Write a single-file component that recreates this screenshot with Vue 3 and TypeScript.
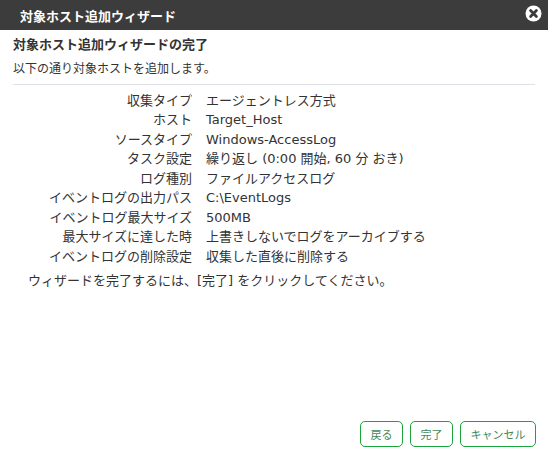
<script setup lang="ts">
const rows: [string, string][] = [
  ['収集タイプ', 'エージェントレス方式'],
  ['ホスト', 'Target_Host'],
  ['ソースタイプ', 'Windows-AccessLog'],
  ['タスク設定', '繰り返し (0:00 開始, 60 分 おき)'],
  ['ログ種別', 'ファイルアクセスログ'],
  ['イベントログの出力パス', 'C:\\EventLogs'],
  ['イベントログ最大サイズ', '500MB'],
  ['最大サイズに達した時', '上書きしないでログをアーカイブする'],
  ['イベントログの削除設定', '収集した直後に削除する'],
]
</script>

<template>
  <div class="dialog">
    <header class="titlebar">
      <span class="title">対象ホスト追加ウィザード</span>
      <svg class="close" width="17" height="17" viewBox="0 0 17 17">
        <circle cx="8.5" cy="8.5" r="8" fill="#fff" />
        <path d="M5.6 5.6 11.4 11.4M11.4 5.6 5.6 11.4" stroke="#3c3c3c" stroke-width="2.8" stroke-linecap="round" fill="none" />
      </svg>
    </header>
    <main class="body">
      <h2 class="heading">対象ホスト追加ウィザードの完了</h2>
      <p class="lead">以下の通り対象ホストを追加します。</p>
      <div class="rows">
        <div v-for="r in rows" :key="r[0]" class="row">
          <span class="key">{{ r[0] }}</span>
          <span class="val">{{ r[1] }}</span>
        </div>
      </div>
      <p class="note">ウィザードを完了するには、[完了] をクリックしてください。</p>
    </main>
    <footer class="actions">
      <button class="btn back">戻る</button>
      <button class="btn done">完了</button>
      <button class="btn cancel">キャンセル</button>
    </footer>
  </div>
</template>

<style>
html, body { margin: 0; background: #fff; }
</style>

<style scoped>
.dialog {
  width: 548px;
  height: 454px;
  display: flex;
  flex-direction: column;
  font-family: "DejaVu Sans", "Noto Sans CJK JP", sans-serif;
  color: #333;
  font-size: 12px;
  background: #fff;
}
.titlebar {
  height: 30px;
  flex: none;
  background: #3c3c3c;
  display: flex;
  align-items: center;
  justify-content: space-between;
  padding: 0 6px 0 20px;
  box-sizing: border-box;
}
.title { color: #fff; font-weight: 700; font-size: 13px; }
.close { margin-top: -4px; }
.body { flex: 1; padding: 0 13px; min-height: 0; }
.heading {
  margin: 6px 0 0;
  font-size: 13px;
  font-weight: 700;
  line-height: 18px;
}
.lead {
  margin: 6px 0 0;
  line-height: 18px;
  padding-bottom: 6px;
  border-bottom: 1px solid #dfe1e6;
}
.rows { padding-top: 5.5px; font-size: 13px; }
.row { display: flex; height: 19.5px; line-height: 19.5px; }
.key { width: 179px; text-align: right; flex: none; }
.val { margin-left: 14px; }
.note { margin: 6px 0 0 15px; line-height: 18px; font-size: 13px; }
.actions {
  flex: none;
  display: flex;
  justify-content: flex-end;
  gap: 7px;
  padding: 0 12px 7px 0;
}
.btn {
  height: 26px;
  box-sizing: border-box;
  background: #fff;
  border: 1px solid #1aa53c;
  border-radius: 5px;
  color: #3f8a5a;
  font-family: inherit;
  font-size: 11px;
  padding: 0;
}
.back, .done { width: 43px; }
.cancel { width: 76px; }
</style>
